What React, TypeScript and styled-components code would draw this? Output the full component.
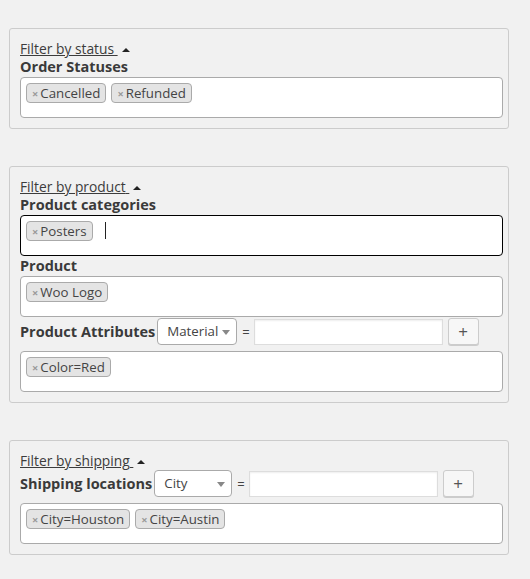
import * as React from "react";
import styled, { createGlobalStyle } from "styled-components";

const GlobalStyle = createGlobalStyle`
  body {
    margin: 0;
    background: #f1f1f1;
    font-family: "Open Sans", "Noto Sans", sans-serif;
    font-size: 13px;
    color: #444;
  }
`;

const Page = styled.div`
  width: 500px;
  padding: 28px 0 20px 9px;
`;

const Fieldset = styled.div`
  box-sizing: border-box;
  border: 1px solid #ccc;
  border-radius: 3px;
  padding: 11px 5px 10px 10px;

  & + & {
    margin-top: 37px;
  }
`;

const Toggle = styled.div`
  line-height: 17px;
  font-size: 13.8px;

  a {
    color: #3c3c3c;
    text-decoration: underline;
  }
`;

const Arrow = styled.span`
  display: inline-block;
  width: 0;
  height: 0;
  margin-left: 4px;
  vertical-align: 2px;
  border-left: 4px solid transparent;
  border-right: 4px solid transparent;
  border-bottom: 4px solid #222;
`;

const Heading = styled.div`
  font-size: 14.5px;
  font-weight: 700;
  line-height: 20px;
  color: #3a3a3a;
`;

const TagBox = styled.div<{ $focused?: boolean }>`
  box-sizing: border-box;
  min-height: 41px;
  background: #fff;
  border: 1px solid ${(p) => (p.$focused ? "#000" : "#aaa")};
  border-radius: 4px;
  padding: 5px;
  display: flex;
  flex-wrap: wrap;
  align-items: flex-start;
  gap: 5px;
`;

const Tag = styled.span`
  box-sizing: border-box;
  height: 20px;
  padding: 0 5px;
  border: 1px solid #aaa;
  border-radius: 4px;
  background: #e4e4e4;
  line-height: 18px;
  font-size: 13.3px;
  color: #444;
  white-space: nowrap;
`;

const Remove = styled.span`
  color: #999;
  font-weight: 700;
  font-size: 11px;
  margin-right: 2px;
`;

const Caret = styled.span`
  width: 1px;
  height: 17px;
  margin: 1px 0 0 7px;
  background: #222;
`;

const Row = styled.div`
  display: flex;
  align-items: center;
  padding: 1px 0 6px;
`;

const RowLabel = styled(Heading)`
  margin-right: 2px;
`;

const Select = styled.div<{ $width: number }>`
  position: relative;
  box-sizing: border-box;
  width: ${(p) => p.$width}px;
  height: 27px;
  background: #fff;
  border: 1px solid #aaa;
  border-radius: 4px;
  padding-left: 9px;
  line-height: 25px;
  font-size: 13.3px;
  color: #444;

  &::after {
    content: "";
    position: absolute;
    right: 6px;
    top: 11px;
    border-left: 4px solid transparent;
    border-right: 4px solid transparent;
    border-top: 5px solid #888;
  }
`;

const Equals = styled.span`
  margin: 0 4px 0 5px;
  color: #444;
`;

const TextInput = styled.input`
  box-sizing: border-box;
  width: 189px;
  height: 26px;
  border: 1px solid #ddd;
  background: #fff;
  box-shadow: inset 0 1px 2px rgba(0, 0, 0, 0.07);
  margin: 0;
  padding: 0 6px;
`;

const PlusButton = styled.button`
  box-sizing: border-box;
  width: 31px;
  height: 27px;
  margin-left: 5px;
  border: 1px solid #ccc;
  border-radius: 3px;
  background: #f7f7f7;
  box-shadow: 0 1px 0 #ccc;
  color: #555;
  font-family: "Open Sans", sans-serif;
  font-size: 17px;
  line-height: 23px;
  padding: 0;
`;

const TagList = ({ tags, focused }: { tags: string[]; focused?: boolean }) => (
  <TagBox $focused={focused}>
    {tags.map((t) => (
      <Tag key={t}>
        <Remove>×</Remove>
        {t}
      </Tag>
    ))}
    {focused ? <Caret /> : null}
  </TagBox>
);

const FilterToggle = ({ label }: { label: string }) => (
  <Toggle>
    <a>{label} </a>
    <Arrow />
  </Toggle>
);

const PairRow = ({ label, value, width }: { label: string; value: string; width: number }) => (
  <Row>
    <RowLabel>{label}</RowLabel>
    <Select $width={width}>{value}</Select>
    <Equals>=</Equals>
    <TextInput type="text" />
    <PlusButton>+</PlusButton>
  </Row>
);

export default function App() {
  return (
    <Page>
      <GlobalStyle />
      <Fieldset>
        <FilterToggle label="Filter by status" />
        <Heading>Order Statuses</Heading>
        <TagList tags={["Cancelled", "Refunded"]} />
      </Fieldset>

      <Fieldset>
        <FilterToggle label="Filter by product" />
        <Heading>Product categories</Heading>
        <TagList tags={["Posters"]} focused />
        <Heading>Product</Heading>
        <TagList tags={["Woo Logo"]} />
        <PairRow label="Product Attributes" value="Material" width={80} />
        <TagList tags={["Color=Red"]} />
      </Fieldset>

      <Fieldset>
        <FilterToggle label="Filter by shipping" />
        <PairRow label="Shipping locations" value="City" width={78} />
        <TagList tags={["City=Houston", "City=Austin"]} />
      </Fieldset>
    </Page>
  );
}
